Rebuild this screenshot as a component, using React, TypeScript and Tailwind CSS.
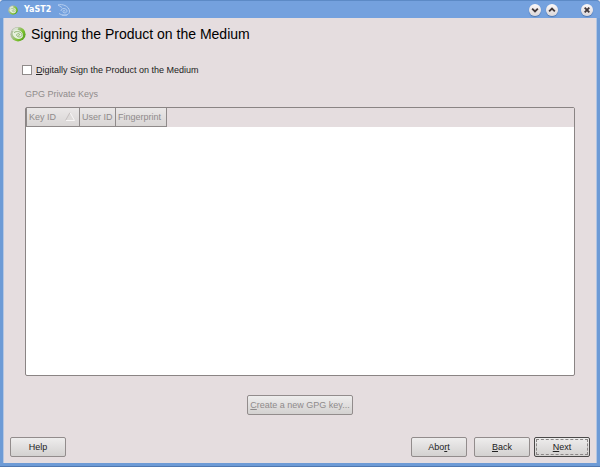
import React from 'react';
import clsx from 'clsx';

const DiscIcon: React.FC<{ className?: string }> = ({ className }) => (
  <svg viewBox="0 0 16 16" className={className} aria-hidden="true">
    <defs>
      <linearGradient id="disc" x1="0" y1="0.2" x2="1" y2="0.8">
        <stop offset="0" stopColor="#b9bdb4" />
        <stop offset="0.35" stopColor="#a3bf86" />
        <stop offset="0.65" stopColor="#7cc22e" />
        <stop offset="1" stopColor="#4f9a1c" />
      </linearGradient>
    </defs>
    <ellipse cx="8" cy="8.2" rx="7.6" ry="7.3" fill="url(#disc)" />
    <path d="M2 5 C3.5 2.5 6 1.4 8.6 1.6 L7 5 Z" fill="#eef0ec" opacity="0.7" />
    <ellipse cx="8" cy="8.4" rx="5.4" ry="4.3" fill="#e6f1dc" transform="rotate(25 8 8)" />
    <path
      d="M4 6.6 C6.5 4.6 11.4 5.6 12 8.4 C12.4 11.2 8.2 11.8 6.8 9.8 C6 8 8.6 6.8 9.6 8.2 C10 9.2 8.8 9.8 8.2 9"
      fill="none"
      stroke="#86ad68"
      strokeWidth="0.9"
    />
  </svg>
);

const SwirlIcon: React.FC = () => (
  <svg viewBox="0 0 14 14" className="size-3.5" fill="none" stroke="#b4cdf0" strokeWidth="1" aria-hidden="true">
    <path d="M1 2 C5 0.5 12 3 12.5 8 C12.8 12 8 13 5 12 L10 12" />
    <path d="M1 2 L5 4.5 M2 10.5 L5 12" />
    <path d="M4 8 C4 4.5 10 5 10 8 C10 10.5 5.5 10.5 6 8.2 C6.4 7 8.4 7.4 8 8.6" />
  </svg>
);

const titleGlyphs = {
  Minimize: 'M3.4 5 L6.5 8 L9.6 5',
  Maximize: 'M3.4 8 L6.5 5 L9.6 8',
  Close: 'M4 4 L9 9 M9 4 L4 9',
};

const TitleButton: React.FC<{ label: keyof typeof titleGlyphs }> = ({ label }) => (
  <button
    aria-label={label}
    className="flex size-3 items-center justify-center rounded-full bg-linear-to-b from-[#fbf8f8] to-[#dcd7d9] shadow-[0_1px_1px_#4f76ad]"
  >
    <svg viewBox="0 0 13 13" className="size-3" fill="none" stroke="#40383a" strokeWidth="2">
      <path d={titleGlyphs[label]} />
    </svg>
  </button>
);

interface PushButtonProps {
  children: React.ReactNode;
  className?: string;
  disabled?: boolean;
  focused?: boolean;
}

const PushButton: React.FC<PushButtonProps> = ({ children, className, disabled, focused }) => (
  <button
    disabled={disabled}
    className={clsx(
      'h-5 rounded-xs border bg-linear-to-b from-[#eeeded] to-[#d3d1d0]',
      focused ? 'border-[#4a4848] p-px' : 'border-[#928c8c]',
      disabled ? 'text-[#8f8b8b]' : 'text-[#222]',
      className
    )}
  >
    {focused ? (
      <span className="flex h-full items-center justify-center border border-dashed border-[#8a8686]">
        <span>{children}</span>
      </span>
    ) : (
      children
    )}
  </button>
);

const columns = [
  { title: 'Key ID', width: 'w-[53px]', sorted: true },
  { title: 'User ID', width: 'w-9', sorted: false },
  { title: 'Fingerprint', width: 'w-[51px]', sorted: false },
];

export default function App() {
  return (
    <div className="min-h-screen bg-[#e8e6ec]">
      <div className="flex min-h-screen flex-col rounded-t border-b border-[#5078b0] bg-[#6d9bd6] px-[3px] pb-[3px] font-['Liberation_Sans',Arial,sans-serif] text-[9px] leading-3 text-[#222]">
        {/* Title bar */}
        <header className="-mx-[3px] flex h-[18px] items-center rounded-t border-t border-[#5c8ac6] bg-[#74a1de] pr-[7px] pl-2">
          <DiscIcon className="size-2.5" />
          <span className="ml-1.5 font-['DejaVu_Sans',sans-serif] text-[8px] font-bold text-white">YaST2</span>
          <span className="ml-1.5">
            <SwirlIcon />
          </span>
          <div className="ml-auto flex gap-[5px]">
            <TitleButton label="Minimize" />
            <TitleButton label="Maximize" />
          </div>
          <div className="ml-[23px]">
            <TitleButton label="Close" />
          </div>
        </header>

        <main className="flex flex-1 flex-col border-x border-[#b4c6e2] bg-[#e5dddf] px-1.5 pt-2 pb-1.5">
          <div className="flex items-center gap-[5px]">
            <DiscIcon className="size-4" />
            <h1 className="text-sm leading-4 text-black">Signing the Product on the Medium</h1>
          </div>

          <div className="flex flex-1 flex-col px-[15px] pt-[22px]">
            <label className="-ml-[3px] flex items-center gap-1">
              <input type="checkbox" className="size-2.5 appearance-none border border-[#8f8a8a] bg-white" />
              <span>
                <u>D</u>igitally Sign the Product on the Medium
              </span>
            </label>

            <h2 id="keys-label" className="mt-3 text-[#8f8b8b]">
              GPG Private Keys
            </h2>

            {/* Key list */}
            <div className="mt-[7px] flex-1 rounded-xs border border-[#8a8484] bg-white">
              <div className="bg-[#e5dddf]">
                <table aria-labelledby="keys-label" className="table-fixed border-collapse text-[#8f8b8b]">
                  <thead>
                    <tr>
                      {columns.map(col => (
                        <th
                          key={col.title}
                          className={clsx(
                            'h-[18px] border border-t-0 border-[#8f8a8a] bg-linear-to-b from-[#eae7e7] to-[#d9d6d5] p-0 pl-0.5 text-left font-normal whitespace-nowrap',
                            col.width
                          )}
                        >
                          <span className="flex items-center justify-between">
                            {col.title}
                            {col.sorted && (
                              <svg viewBox="0 0 10 9" className="mr-1 h-[9px] w-2.5" aria-hidden="true">
                                <path d="M5 0.5 L9.5 8.5 L0.5 8.5 Z" fill="#dedbda" />
                                <path d="M5 0.5 L9.5 8.5 L0.5 8.5" fill="none" stroke="#f8f6f6" />
                                <path d="M0.5 8.5 L5 0.5" stroke="#c4bfbf" />
                              </svg>
                            )}
                          </span>
                        </th>
                      ))}
                    </tr>
                  </thead>
                  <tbody />
                </table>
              </div>
            </div>

            <div className="mt-[19px] flex justify-center">
              <PushButton disabled className="px-0.5">
                <u>C</u>reate a new GPG key...
              </PushButton>
            </div>
          </div>

          {/* Wizard buttons */}
          <footer className="mt-[22px] flex">
            <PushButton className="w-14">Help</PushButton>
            <PushButton className="ml-auto w-14">
              Abo<u>r</u>t
            </PushButton>
            <PushButton className="ml-[7px] w-14">
              <u>B</u>ack
            </PushButton>
            <PushButton focused className="ml-1 w-14">
              <u>N</u>ext
            </PushButton>
          </footer>
        </main>
      </div>
    </div>
  );
}
